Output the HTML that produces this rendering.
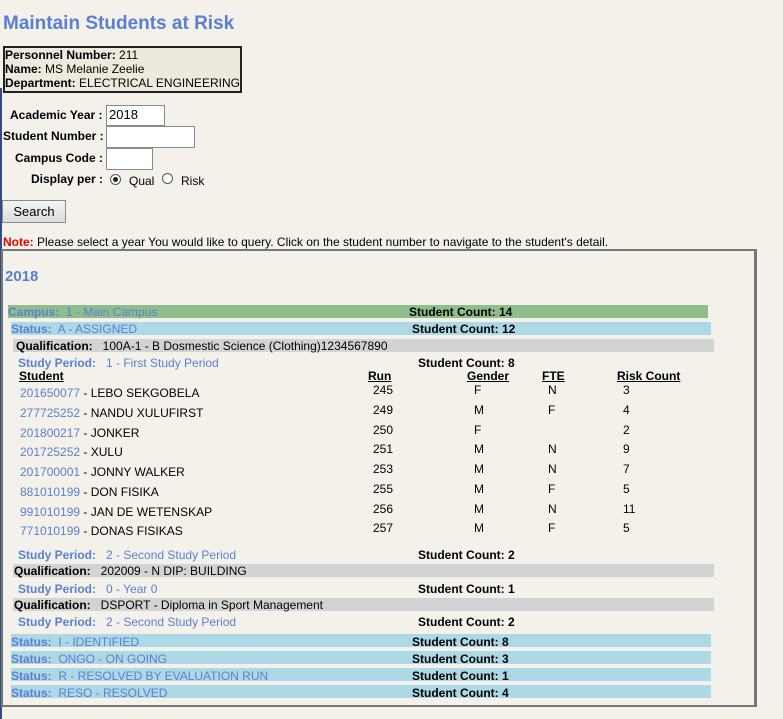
<!DOCTYPE html>
<html><head><meta charset="utf-8"><style>
body{margin:0;width:783px;height:719px;background:#f3f1ea;font-family:"Liberation Sans",sans-serif;font-size:12px;color:#000;position:relative;overflow:hidden}
.a{position:absolute;white-space:nowrap;line-height:14px}
.b{font-weight:bold}
.bl{color:#5b80cf}
.bar{position:absolute;height:13px}
.in{position:absolute;background:#fff;border:1px solid #8a8a8a;box-sizing:border-box;font-size:13px;line-height:18px;padding-left:2px}
.u{text-decoration:underline;font-weight:bold}
.rad{position:absolute;width:11px;height:11px;border:1px solid #555;border-radius:50%;background:#fff;box-sizing:border-box}
</style></head><body>
<div class="a b bl" style="left:3px;top:13px;font-size:19px;line-height:22px;color:#5a80d2">Maintain Students at Risk</div>
<div style="position:absolute;left:0px;top:88px;width:2px;height:631px;background:#2d4f86"></div>
<div style="position:absolute;left:3px;top:46px;width:239px;height:47px;border:2px solid #222;box-sizing:border-box;background:#ede9dc"></div>
<div class="a" style="left:5px;top:48px"><b>Personnel Number:</b> 211</div>
<div class="a" style="left:5px;top:62px"><b>Name:</b> MS Melanie Zeelie</div>
<div class="a" style="left:5px;top:76px"><b>Department:</b> ELECTRICAL ENGINEERING</div>

<div class="a b" style="left:10px;top:108px">Academic Year :</div>
<div class="in" style="left:106px;top:105px;width:59px;height:21px">2018</div>
<div class="a b" style="left:3px;top:129px">Student Number :</div>
<div class="in" style="left:106px;top:126px;width:89px;height:22px"></div>
<div class="a b" style="left:15px;top:151px">Campus Code :</div>
<div class="in" style="left:106px;top:148px;width:47px;height:22px"></div>
<div class="a b" style="left:31px;top:172px">Display per :</div>
<div class="rad" style="left:110px;top:174px"></div><div style="position:absolute;left:113px;top:177px;width:5px;height:5px;border-radius:50%;background:#222"></div>
<div class="a" style="left:129px;top:174px">Qual</div>
<div class="rad" style="left:162px;top:173px"></div>
<div class="a" style="left:181px;top:174px">Risk</div>
<div style="position:absolute;left:2px;top:200px;width:64px;height:23px;border:1px solid #8a8a8a;box-sizing:border-box;background:linear-gradient(#f4f4f4,#dcdcdc);font-size:13px;line-height:21px;text-align:center">Search</div>
<div class="a" style="left:3px;top:235px"><b style="color:#e00">Note:</b> Please select a year You would like to query. Click on the student number to navigate to the student's detail.</div>

<div style="position:absolute;left:1px;top:249px;width:756px;height:458px;border:2px solid #777;border-right-width:3px;box-sizing:border-box"></div>
<div class="a b bl" style="left:5px;top:268px;font-size:15px;line-height:17px">2018</div>

<div class="bar" style="left:8px;top:305px;width:700px;background:#8fbe8c"></div>
<div class="a bl" style="left:8px;top:305px"><b>Campus:</b>&nbsp; 1 - Main Campus</div>
<div class="a b" style="left:409px;top:305px">Student Count: 14</div>
<div class="bar" style="left:11px;top:322px;width:700px;background:#add8e6"></div>
<div class="a bl" style="left:11px;top:322px"><b>Status:</b>&nbsp; A - ASSIGNED</div>
<div class="a b" style="left:412px;top:322px">Student Count: 12</div>
<div class="bar" style="left:13px;top:339px;width:701px;background:#d3d3d3"></div>
<div class="a" style="left:16px;top:339px"><b>Qualification:</b>&nbsp;&nbsp; 100A-1 - B Dosmestic Science (Clothing)1234567890</div>
<div class="a bl" style="left:18px;top:356px"><b>Study Period:</b>&nbsp;&nbsp; 1 - First Study Period</div>
<div class="a b" style="left:418px;top:356px">Student Count: 8</div>
<div class="a u" style="left:19px;top:369px">Student</div>
<div class="a u" style="left:368px;top:369px">Run</div>
<div class="a u" style="left:467px;top:369px">Gender</div>
<div class="a u" style="left:542px;top:369px">FTE</div>
<div class="a u" style="left:617px;top:369px">Risk Count</div>

<div class="a" style="left:20px;top:386px"><span class="bl">201650077</span> - LEBO SEKGOBELA</div><div class="a" style="left:373px;top:383px">245</div><div class="a" style="left:474px;top:383px">F</div><div class="a" style="left:548px;top:383px">N</div><div class="a" style="left:623px;top:383px">3</div>
<div class="a" style="left:20px;top:406px"><span class="bl">277725252</span> - NANDU XULUFIRST</div><div class="a" style="left:373px;top:403px">249</div><div class="a" style="left:474px;top:403px">M</div><div class="a" style="left:548px;top:403px">F</div><div class="a" style="left:623px;top:403px">4</div>
<div class="a" style="left:20px;top:426px"><span class="bl">201800217</span> - JONKER</div><div class="a" style="left:373px;top:423px">250</div><div class="a" style="left:474px;top:423px">F</div><div class="a" style="left:623px;top:423px">2</div>
<div class="a" style="left:20px;top:445px"><span class="bl">201725252</span> - XULU</div><div class="a" style="left:373px;top:442px">251</div><div class="a" style="left:474px;top:442px">M</div><div class="a" style="left:548px;top:442px">N</div><div class="a" style="left:623px;top:442px">9</div>
<div class="a" style="left:20px;top:465px"><span class="bl">201700001</span> - JONNY WALKER</div><div class="a" style="left:373px;top:462px">253</div><div class="a" style="left:474px;top:462px">M</div><div class="a" style="left:548px;top:462px">N</div><div class="a" style="left:623px;top:462px">7</div>
<div class="a" style="left:20px;top:485px"><span class="bl">881010199</span> - DON FISIKA</div><div class="a" style="left:373px;top:482px">255</div><div class="a" style="left:474px;top:482px">M</div><div class="a" style="left:548px;top:482px">F</div><div class="a" style="left:623px;top:482px">5</div>
<div class="a" style="left:20px;top:505px"><span class="bl">991010199</span> - JAN DE WETENSKAP</div><div class="a" style="left:373px;top:502px">256</div><div class="a" style="left:474px;top:502px">M</div><div class="a" style="left:548px;top:502px">N</div><div class="a" style="left:623px;top:502px">11</div>
<div class="a" style="left:20px;top:524px"><span class="bl">771010199</span> - DONAS FISIKAS</div><div class="a" style="left:373px;top:521px">257</div><div class="a" style="left:474px;top:521px">M</div><div class="a" style="left:548px;top:521px">F</div><div class="a" style="left:623px;top:521px">5</div>

<div class="a bl" style="left:18px;top:548px"><b>Study Period:</b>&nbsp;&nbsp; 2 - Second Study Period</div>
<div class="a b" style="left:418px;top:548px">Student Count: 2</div>
<div class="bar" style="left:13px;top:564px;width:701px;background:#d3d3d3"></div>
<div class="a" style="left:14px;top:564px"><b>Qualification:</b>&nbsp;&nbsp; 202009 - N DIP: BUILDING</div>
<div class="a bl" style="left:18px;top:582px"><b>Study Period:</b>&nbsp;&nbsp; 0 - Year 0</div>
<div class="a b" style="left:418px;top:582px">Student Count: 1</div>
<div class="bar" style="left:13px;top:598px;width:701px;background:#d3d3d3"></div>
<div class="a" style="left:14px;top:598px"><b>Qualification:</b>&nbsp;&nbsp; DSPORT - Diploma in Sport Management</div>
<div class="a bl" style="left:18px;top:615px"><b>Study Period:</b>&nbsp;&nbsp; 2 - Second Study Period</div>
<div class="a b" style="left:418px;top:615px">Student Count: 2</div>

<div class="bar" style="left:11px;top:634px;width:700px;background:#add8e6"></div>
<div class="a bl" style="left:11px;top:635px"><b>Status:</b>&nbsp; I - IDENTIFIED</div>
<div class="a b" style="left:412px;top:635px">Student Count: 8</div>
<div class="bar" style="left:11px;top:651px;width:700px;background:#add8e6"></div>
<div class="a bl" style="left:11px;top:652px"><b>Status:</b>&nbsp; ONGO - ON GOING</div>
<div class="a b" style="left:412px;top:652px">Student Count: 3</div>
<div class="bar" style="left:11px;top:668px;width:700px;background:#add8e6"></div>
<div class="a bl" style="left:11px;top:669px"><b>Status:</b>&nbsp; R - RESOLVED BY EVALUATION RUN</div>
<div class="a b" style="left:412px;top:669px">Student Count: 1</div>
<div class="bar" style="left:11px;top:685px;width:700px;background:#add8e6"></div>
<div class="a bl" style="left:11px;top:686px"><b>Status:</b>&nbsp; RESO - RESOLVED</div>
<div class="a b" style="left:412px;top:686px">Student Count: 4</div>
</body></html>
